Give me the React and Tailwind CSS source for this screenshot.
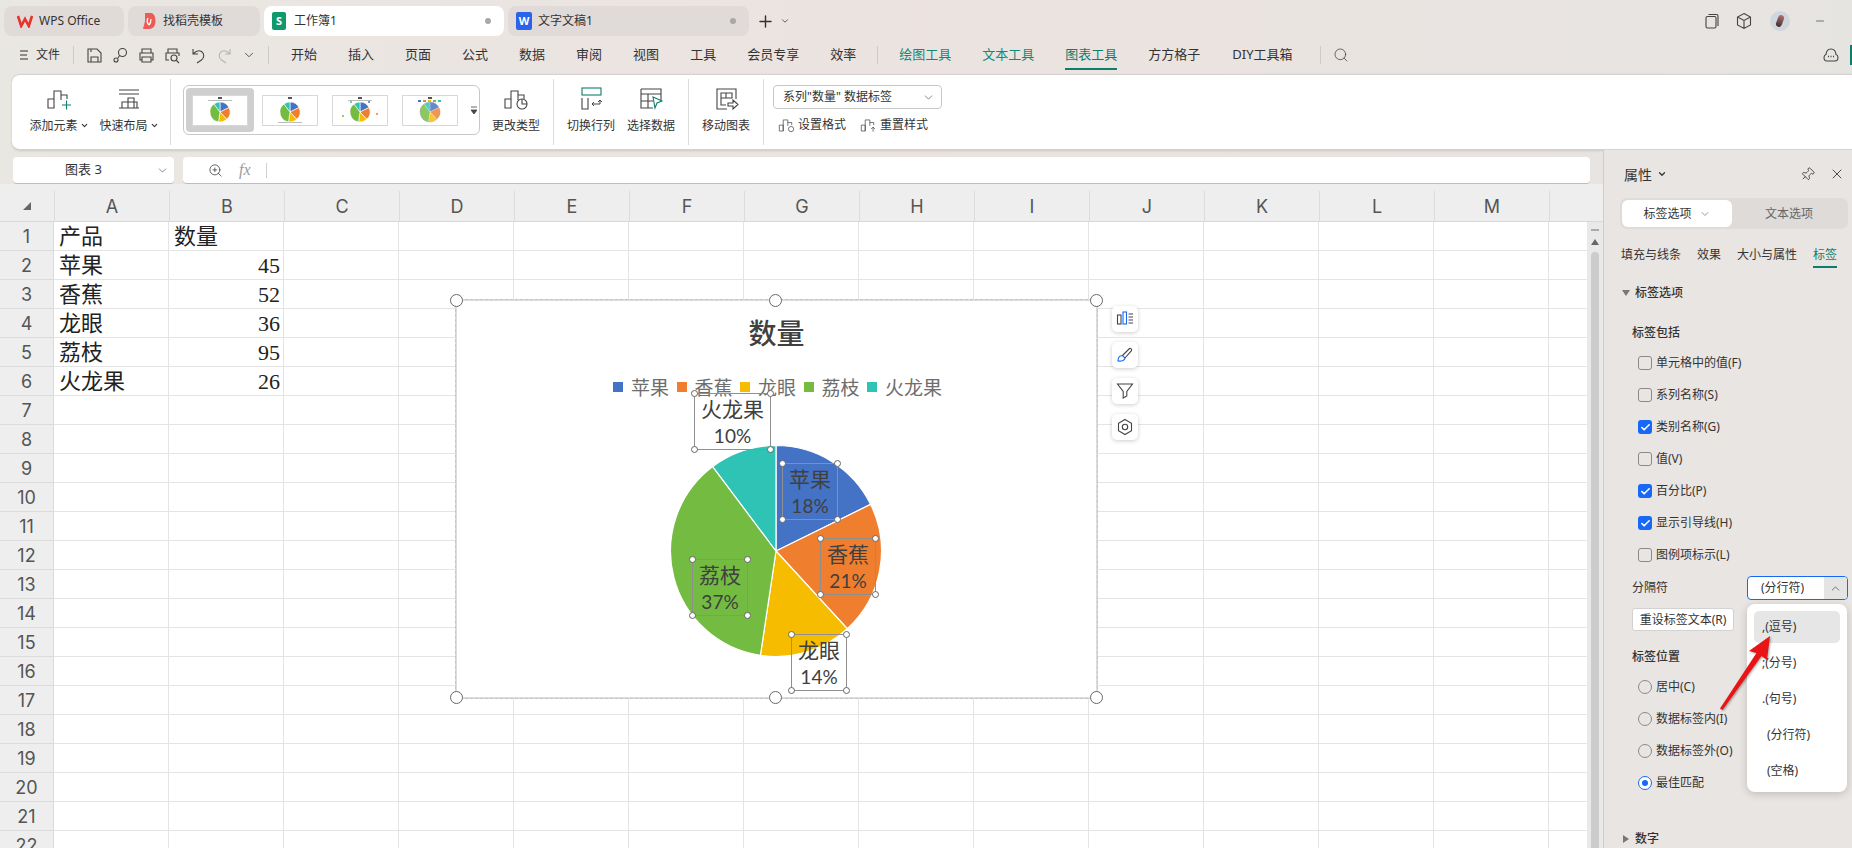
import React from "react";
import { Check, ChevronDown, ChevronUp, Plus, Search, X, Pin, Minus, ZoomIn } from "lucide-react";

const PIE = [
  { name: "苹果", value: 45, color: "#4472c4" },
  { name: "香蕉", value: 52, color: "#ef7f2e" },
  { name: "龙眼", value: 36, color: "#f5bc00" },
  { name: "荔枝", value: 95, color: "#74bb42" },
  { name: "火龙果", value: 26, color: "#2ec3b4" },
];

function slices(cx, cy, r) {
  const total = PIE.reduce((s, p) => s + p.value, 0);
  let a = 0;
  return PIE.map((p) => {
    const a2 = a + (p.value / total) * Math.PI * 2;
    const x1 = cx + r * Math.sin(a);
    const y1 = cy - r * Math.cos(a);
    const x2 = cx + r * Math.sin(a2);
    const y2 = cy - r * Math.cos(a2);
    const large = a2 - a > Math.PI ? 1 : 0;
    a = a2;
    return { d: `M${cx} ${cy}L${x1} ${y1}A${r} ${r} 0 ${large} 1 ${x2} ${y2}Z`, color: p.color };
  });
}

const COLS = ["A", "B", "C", "D", "E", "F", "G", "H", "I", "J", "K", "L", "M", ""];
const ROWS = Array.from({ length: 22 }, (_, i) => i + 1);
const DATA = {
  1: ["产品", "数量"],
  2: ["苹果", 45],
  3: ["香蕉", 52],
  4: ["龙眼", 36],
  5: ["荔枝", 95],
  6: ["火龙果", 26],
};

const LABELS = [
  { name: "火龙果", pct: "10%", left: 238, top: 93, w: 77 },
  { name: "苹果", pct: "18%", left: 326, top: 163, w: 56 },
  { name: "香蕉", pct: "21%", left: 364, top: 238, w: 56 },
  { name: "龙眼", pct: "14%", left: 335, top: 334, w: 56 },
  { name: "荔枝", pct: "37%", left: 236, top: 259, w: 56 },
];

function Bars({ x = 0, y = 0 }) {
  return (
    <path
      transform={`translate(${x} ${y})`}
      d="M1 22V13H7V22ZM7 22V5H14V14M14 9H20V13"
      fill="none"
      stroke="#444"
      strokeWidth="1.1"
    />
  );
}

function Ico({ children, size = 26 }) {
  return (
    <svg width={size} height={size} viewBox="0 0 26 26" fill="none" stroke="#444" strokeWidth="1.1">
      {children}
    </svg>
  );
}

function RibbonBtn({ icon, label, caret }) {
  return (
    <div className="flex flex-col items-center w-[60px] pt-[11px]">
      <div className="h-[26px] flex items-center justify-center">{icon}</div>
      <div className="mt-[5px] h-[17px] flex items-center text-[12px] text-[#333] whitespace-nowrap">
        {label}
        {caret && <ChevronDown className="w-[9px] h-[9px] ml-[2px]" strokeWidth={3} />}
      </div>
    </div>
  );
}

function Sep() {
  return <div className="w-px h-[66px] bg-[#dcdcdc] shrink-0" />;
}

function Thumb({ selected, pie = "a", legendBottom }) {
  return (
    <div className={`w-[68px] h-[44px] flex items-center justify-center rounded-[4px] ${selected ? "bg-[#cfcfcf]" : ""}`}>
      <div className="w-[56px] h-[31px] bg-white border border-[#d8d8d8] flex items-center justify-center relative">
        <svg width="54" height="29" viewBox="0 0 54 29">
          <rect x="25" y="1" width="4" height="2" fill="#555" />
          {!legendBottom && pie !== "d" && <rect x="15" y="4" width="24" height="1" fill="#bbb" />}
          {legendBottom && <rect x="15" y="26" width="24" height="1" fill="#bbb" />}
          {pie === "d" &&
            PIE.map((p, i) => <rect key={i} x={15 + i * 5} y="4" width="3" height="2" fill={p.color} />)}
          {slices(27, 16, 10).map((s, i) => (
            <path key={i} d={s.d} fill={s.color} stroke="#fff" strokeWidth={pie === "d" ? 0.2 : 0.6} />
          ))}
          {pie === "c" && <circle cx="10" cy="20" r="1" fill="#74bb42" />}
          {pie === "c" && <circle cx="44" cy="18" r="1" fill="#ef7f2e" />}
          {pie === "c" && <circle cx="18" cy="6" r="1" fill="#2ec3b4" />}
          {pie === "c" && <circle cx="36" cy="6" r="1" fill="#4472c4" />}
          {pie === "d" && <circle cx="27" cy="16" r="10" fill="#fff" fillOpacity="0.18" stroke="#999" strokeWidth="0.4" />}
        </svg>
      </div>
    </div>
  );
}

function Tab({ w, active, icon, label, dot }) {
  return (
    <div className={`h-[30px] rounded-lg flex items-center shrink-0 ${w} ${active ? "bg-white" : "bg-[#e0dbd8]"}`}>
      {icon}
      <span className="text-[12px] text-[#333]">{label}</span>
      {dot && <span className="ml-auto mr-[13px] w-[6px] h-[6px] rounded-full bg-[#a8a8a8]" />}
    </div>
  );
}

function CheckRow({ label, checked }) {
  return (
    <div className="h-[32px] flex items-center pl-[34px]">
      <span className={`w-[14px] h-[14px] rounded-[3px] flex items-center justify-center shrink-0 ${checked ? "bg-[#1769f5]" : "border border-[#8a8a8a]"}`}>
        {checked && <Check className="w-[11px] h-[11px] text-white" strokeWidth={3.5} />}
      </span>
      <span className="ml-[4px] text-[12px] text-[#333] whitespace-nowrap">{label}</span>
    </div>
  );
}

function RadioRow({ label, checked }) {
  return (
    <div className="h-[32px] flex items-center pl-[34px]">
      <span className={`w-[14px] h-[14px] rounded-full flex items-center justify-center shrink-0 border ${checked ? "border-[#1769f5] bg-white" : "border-[#8a8a8a]"}`}>
        {checked && <span className="w-[6px] h-[6px] rounded-full bg-[#1769f5]" />}
      </span>
      <span className="ml-[4px] text-[12px] text-[#333] whitespace-nowrap">{label}</span>
    </div>
  );
}

function Handle({ className, big }) {
  return (
    <span className={`absolute rounded-full bg-white border border-[#666] ${big ? "w-[13px] h-[13px]" : "w-[7px] h-[7px]"} ${className}`} />
  );
}

function SideBtn({ children }) {
  return (
    <div className="w-[26px] h-[26px] rounded-[5px] bg-white shadow-[0_1px_4px_rgba(0,0,0,0.2)] flex items-center justify-center">
      {children}
    </div>
  );
}

function Chart() {
  return (
    <div className="absolute left-[455px] top-[77px] w-[643px] h-[400px] bg-white border-2 border-[#dcdcdc]">
      <div className="absolute -inset-[2px] border border-dashed border-[#c6c6c6]" />
      <div className="pt-[14px] text-center text-[28px] leading-[40px] font-medium text-[#404040] [font-family:'Liberation_Serif','Noto_Sans_CJK_SC',serif]">数量</div>
      <div className="absolute left-[156px] top-[73px] flex items-center text-[19px] leading-[26px] text-[#6e6e6e] [font-family:'Noto_Sans_CJK_SC',sans-serif]">
        {PIE.map((p, i) => (
          <div key={p.name} className={`flex items-center ${i > 0 ? "ml-[7.5px]" : ""}`}>
            <span className="w-[10px] h-[10px] mr-[8px]" style={{ background: p.color }} />
            {p.name}
          </div>
        ))}
      </div>
      <svg className="absolute left-[0px] top-[0px]" width="639" height="396" viewBox="0 0 639 396">
        {slices(319, 250, 105.5).map((s, i) => (
          <path key={i} d={s.d} fill={s.color} stroke="#fff" strokeWidth="1.2" />
        ))}
      </svg>
      {LABELS.map((l) => (
        <div
          key={l.name}
          className="absolute h-[57px] border border-[#8f8f8f] flex flex-col items-center justify-center text-[#404040] leading-[27px]"
          style={{ left: l.left - 1, top: l.top - 1, width: l.w }}
        >
          <span className="text-[21px] [font-family:'Noto_Sans_CJK_SC',sans-serif]">{l.name}</span>
          <span className="text-[19px] [font-family:Lato,sans-serif]">{l.pct}</span>
          <Handle className="-left-[4px] -top-[4px]" />
          <Handle className="-right-[4px] -top-[4px]" />
          <Handle className="-left-[4px] -bottom-[4px]" />
          <Handle className="-right-[4px] -bottom-[4px]" />
        </div>
      ))}
      <Handle big className="-left-[7px] -top-[7px]" />
      <Handle big className="left-[312px] -top-[7px]" />
      <Handle big className="-right-[7px] -top-[7px]" />
      <Handle big className="-left-[7px] -bottom-[7px]" />
      <Handle big className="left-[312px] -bottom-[7px]" />
      <Handle big className="-right-[7px] -bottom-[7px]" />
      <div className="absolute left-[655px] top-[5px] flex flex-col gap-[10px]">
        <SideBtn>
          <svg width="18" height="18" viewBox="0 0 18 18" fill="none" stroke="#444" strokeWidth="1.1">
            <rect x="1.5" y="5" width="3.5" height="9" />
            <rect x="7" y="2" width="3.5" height="12" stroke="#1769f5" />
            <path d="M12.5 4H17M12.5 7H17M12.5 10H17M12.5 13H17" />
          </svg>
        </SideBtn>
        <SideBtn>
          <svg width="18" height="18" viewBox="0 0 18 18" fill="none" stroke="#1769f5" strokeWidth="1.1">
            <path d="M2 15C2 11 4 9.5 6.5 9.5L9 12C9 14 6 15.5 2 15Z" />
            <path d="M6.5 9.5L13.5 2.5C14.5 1.8 16.3 3.5 15.5 4.7L9 12" stroke="#444" />
          </svg>
        </SideBtn>
        <SideBtn>
          <svg width="18" height="18" viewBox="0 0 18 18" fill="none" stroke="#444" strokeWidth="1.1">
            <path d="M1.5 2H16.5L10.8 9.5V14L7.2 16V9.5Z" />
          </svg>
        </SideBtn>
        <SideBtn>
          <svg width="18" height="18" viewBox="0 0 18 18" fill="none" stroke="#444" strokeWidth="1.1">
            <path d="M9 1.5L15.5 5.2V12.8L9 16.5L2.5 12.8V5.2Z" />
            <circle cx="9" cy="9" r="2.7" />
          </svg>
        </SideBtn>
      </div>
    </div>
  );
}

function Sheet() {
  return (
    <div className="flex-1 min-h-0 flex flex-col overflow-hidden">
      <div className="flex h-[38px] shrink-0 bg-[#eeeeee] border-b border-[#d8d8d8] overflow-hidden">
        <div className="w-[54px] shrink-0 pt-[7px] flex items-center justify-center">
          <svg width="10" height="10" viewBox="0 0 10 10"><path d="M9 1V9H1Z" fill="#666" /></svg>
        </div>
        {COLS.map((c, i) => (
          <div key={i} className="w-[115px] shrink-0 mt-[7px] flex items-center justify-center border-l border-[#dcdcdc] text-[18px] text-[#555] [font-family:Inter,sans-serif]">
            {c}
          </div>
        ))}
      </div>
      <div className="flex-1 min-h-0 flex">
        <div className="relative flex-1 min-w-0 overflow-hidden bg-white">
          {ROWS.map((r) => {
            const d = DATA[r] || [];
            return (
              <div key={r} className="flex h-[29px]">
                <div className="w-[54px] shrink-0 flex items-center justify-center bg-[#eeeeee] border-r border-b border-[#dcdcdc] text-[18px] text-[#555] [font-family:Inter,sans-serif]">
                  {r}
                </div>
                {COLS.map((c, i) => {
                  const v = d[i];
                  return (
                    <div
                      key={i}
                      className={`w-[115px] shrink-0 border-r border-b border-[#e4e4e4] pt-[1px] flex items-center text-[22px] text-[#222] [font-family:'Liberation_Serif','Noto_Sans_CJK_SC',serif] ${typeof v === "number" ? "justify-end pr-[3px]" : "pl-[5px]"}`}
                    >
                      {v}
                    </div>
                  );
                })}
              </div>
            );
          })}
          <Chart />
        </div>
        {/* scrollbar */}
        <div className="w-[16px] shrink-0 bg-[#e9e9e9] flex flex-col items-center pt-[7px]">
          <span className="w-[8px] h-[2px] bg-[#aaaaaa]" />
          <svg width="8" height="6" viewBox="0 0 8 6" className="mt-[8px]"><path d="M0 6L4 0L8 6Z" fill="#666" /></svg>
          <span className="mt-[7px] w-[8px] flex-1 rounded-t-full bg-[#cccccc]" />
        </div>
      </div>
    </div>
  );
}

function Panel() {
  return (
    <div className="relative w-[249px] shrink-0 border-l border-[#cfccc9] bg-[#e9e5e2] text-[#333] overflow-hidden">
      <div className="h-[48px] flex items-center pl-[20px] pr-[7px]">
        <span className="text-[14px]">属性</span>
        <ChevronDown className="w-[10px] h-[10px] ml-[5px]" strokeWidth={3} />
        <Pin className="w-[15px] h-[15px] ml-auto rotate-45" strokeWidth={1.3} />
        <X className="w-[16px] h-[16px] ml-[14px]" strokeWidth={1.3} />
      </div>
      <div className="ml-[16px] w-[228px] h-[31px] rounded-[7px] bg-[#dfdbd8] flex items-center p-[2px] text-[12px]">
        <div className="w-[110px] h-[27px] rounded-[6px] bg-white flex items-center justify-center">
          标签选项
          <ChevronDown className="w-[12px] h-[12px] ml-[7px] text-[#777]" strokeWidth={1.5} />
        </div>
        <div className="flex-1 text-center text-[#666]">文本选项</div>
      </div>
      <div className="mt-[17px] pl-[17px] flex text-[12px] h-[22px]">
        <span>填充与线条</span>
        <span className="ml-[16px]">效果</span>
        <span className="ml-[16px]">大小与属性</span>
        <span className="ml-[16px] h-[22px] border-b-2 border-[#0e7d6c] text-[#0e7d6c]">标签</span>
      </div>
      <div className="mt-[16px] h-[18px] pl-[18px] flex items-center text-[12px] font-medium">
        <svg width="8" height="8" viewBox="0 0 8 8" className="mr-[5px]"><path d="M0 1H8L4 7Z" fill="#777" /></svg>
        标签选项
      </div>
      <div className="mt-[22px] h-[18px] pl-[28px] flex items-center text-[12px] font-medium">标签包括</div>
      <div className="mt-[5px]">
        <CheckRow label="单元格中的值(F)" />
        <CheckRow label="系列名称(S)" />
        <CheckRow label="类别名称(G)" checked />
        <CheckRow label="值(V)" />
        <CheckRow label="百分比(P)" checked />
        <CheckRow label="显示引导线(H)" checked />
        <CheckRow label="图例项标示(L)" />
      </div>
      <div className="mt-[5px] h-[24px] flex items-center pl-[28px] text-[12px]">
        分隔符
        <div className="ml-auto mr-[4px] w-[101px] h-[24px] rounded-[4px] border border-[#1769f5] flex items-center overflow-hidden bg-white">
          <span className="flex-1 pl-[13px]">(分行符)</span>
          <span className="w-[23px] h-full bg-[#e4e4e4] flex items-center justify-center">
            <ChevronUp className="w-[13px] h-[13px] text-[#555]" strokeWidth={1.5} />
          </span>
        </div>
      </div>
      <div className="mt-[8px] ml-[28px] w-[102px] h-[23px] rounded-[3px] bg-white border border-[#d2d2d2] flex items-center justify-center text-[12px] whitespace-nowrap">
        重设标签文本(R)
      </div>
      <div className="mt-[16px] h-[20px] pl-[28px] flex items-center text-[12px] font-medium">标签位置</div>
      <div className="mt-[4px]">
        <RadioRow label="居中(C)" />
        <RadioRow label="数据标签内(I)" />
        <RadioRow label="数据标签外(O)" />
        <RadioRow label="最佳匹配" checked />
      </div>
      <div className="mt-[30px] h-[20px] pl-[18px] flex items-center text-[12px] font-medium">
        <svg width="8" height="8" viewBox="0 0 8 8" className="mr-[5px]"><path d="M1 0L7 4L1 8Z" fill="#777" /></svg>
        数字
      </div>

      <div className="absolute left-[143px] top-[454px] w-[100px] pt-[7px] pb-[1px] px-[7px] rounded-lg bg-white shadow-[0_2px_8px_rgba(0,0,0,0.18)] text-[12px]">
        <div className="h-[32px] mb-[4px] rounded-[5px] bg-[#e6e6e6] flex items-center pl-[8px]">,(逗号)</div>
        <div className="h-[32px] mb-[4px] flex items-center pl-[8px]">;(分号)</div>
        <div className="h-[32px] mb-[4px] flex items-center pl-[8px]">.(句号)</div>
        <div className="h-[32px] mb-[4px] flex items-center pl-[13px]">(分行符)</div>
        <div className="h-[32px] mb-[4px] flex items-center pl-[13px]">(空格)</div>
      </div>
      <svg className="absolute left-[106px] top-[480px] drop-shadow-[1px_1px_1px_rgba(0,0,0,0.35)]" width="70" height="85" viewBox="0 0 70 85">
        <polygon points="60,6 57,30 51.5,26 12.5,80 10,78.5 46.5,23 39,21" fill="#e81416" />
      </svg>
    </div>
  );
}

export default function App() {
  return (
    <div className="w-[1852px] h-[848px] overflow-hidden flex flex-col bg-gradient-to-r from-[#e9e7e2] via-[#ece3e0] to-[#e6e4e1] [font-family:'Noto_Sans','Noto_Sans_CJK_SC',sans-serif]">
      {/* tabs */}
      <div className="h-[36px] pt-[6px] pl-[4px] flex items-center gap-[4px] shrink-0 relative">
        <Tab
          w="w-[120px]"
          label="WPS Office"
          icon={
            <svg width="16" height="14" viewBox="0 0 16 14" className="ml-[13px] mr-[6px]" fill="none" stroke="#e8332a" strokeWidth="2.6">
              <path d="M1 2L4.2 12L8 5L11.8 12L15 2" />
            </svg>
          }
        />
        <Tab
          w="w-[132px]"
          label="找稻壳模板"
          icon={
            <svg width="14" height="18" viewBox="0 0 14 18" className="ml-[14px] mr-[7px]">
              <path d="M3 1H9C12 1 13.5 5 13.5 9C13.5 14 11 17 7 17H1L3 9Z" fill="#ec5b56" />
              <path d="M7 13C5 11 5 8 6 6M7 13C9 11 9 9 9 7" stroke="#fff" strokeWidth="1.3" fill="none" />
            </svg>
          }
        />
        <Tab
          w="w-[240px]"
          active
          dot
          label="工作簿1"
          icon={<span className="ml-[8px] mr-[8px] w-[14px] h-[18px] rounded-[2px] bg-[#12996b] text-white text-[11px] font-bold flex items-center justify-center">S</span>}
        />
        <Tab
          w="w-[241px]"
          dot
          label="文字文稿1"
          icon={<span className="ml-[8px] mr-[6px] w-[16px] h-[18px] rounded-[2px] bg-[#2a62ea] text-white text-[11px] font-bold flex items-center justify-center">W</span>}
        />
        <Plus className="w-[19px] h-[19px] ml-[3px] text-[#333]" strokeWidth={1.8} />
        <ChevronDown className="w-[10px] h-[10px] ml-[1px] text-[#444]" strokeWidth={2} />
        <div className="ml-auto flex items-center pr-[26px]">
          <svg width="16" height="16" viewBox="0 0 16 16" fill="none" stroke="#444" strokeWidth="1.1">
            <rect x="2" y="3.5" width="10" height="11.5" rx="1.5" />
            <path d="M4.5 1.5H12.5C13.5 1.5 14 2 14 3V13" />
          </svg>
          <svg width="16" height="18" viewBox="0 0 16 18" className="ml-[16px]" fill="none" stroke="#444" strokeWidth="1.1">
            <path d="M8 1.5L14.5 5V13L8 16.5L1.5 13V5ZM1.5 5L8 8.5L14.5 5M8 8.5V16.5" />
          </svg>
          <span className="ml-[18px] w-[20px] h-[20px] rounded-full bg-[#cfd6dc] flex items-center justify-center">
            <span className="w-[6px] h-[12px] rounded-full bg-gradient-to-b from-[#b86a72] to-[#3c3436] rotate-[20deg]" />
          </span>
          <Minus className="w-[12px] h-[12px] ml-[24px] text-[#333]" strokeWidth={1.3} />
        </div>
      </div>

      {/* menu */}
      <div className="h-[38px] flex items-center shrink-0 text-[13px] text-[#333] relative">
        <svg width="10" height="10" viewBox="0 0 10 10" className="ml-[19px]" stroke="#333" strokeWidth="1.1" fill="none"><path d="M1 1H9M1 5H8M1 9H9" /></svg>
        <span className="ml-[7px] text-[12px]">文件</span>
        <span className="ml-[13px] w-px h-[18px] bg-[#cdcac7]" />
        <div className="ml-[12px] flex items-center gap-[9px]">
          <svg width="17" height="17" viewBox="0 0 17 17" fill="none" stroke="#444" strokeWidth="1.1"><path d="M2 2H11L15 6V15H2ZM5 15V10H12V15M5 2V5" /></svg>
          <svg width="17" height="17" viewBox="0 0 17 17" fill="none" stroke="#444" strokeWidth="1.1"><circle cx="10.5" cy="5.5" r="4" /><circle cx="4" cy="13" r="2" /><path d="M7.5 8.5L6 11" /></svg>
          <svg width="17" height="17" viewBox="0 0 17 17" fill="none" stroke="#444" strokeWidth="1.1"><path d="M4 6V2H13V6M4 13H2V6H15V13H13M4 10H13V15H4Z" /></svg>
          <svg width="17" height="17" viewBox="0 0 17 17" fill="none" stroke="#444" strokeWidth="1.1"><path d="M4 6V2H13V6M5 13H2V6H15V9" /><circle cx="10" cy="11" r="3" /><path d="M12.5 13.5L15 16" /></svg>
          <svg width="17" height="17" viewBox="0 0 17 17" fill="none" stroke="#444" strokeWidth="1.1"><path d="M3 2V7H8M3 7C6 4 9 3 11.5 4.5C14.5 6.5 14.5 11 11.5 13L7 16" /></svg>
          <svg width="17" height="17" viewBox="0 0 17 17" fill="none" stroke="#b5b5b5" strokeWidth="1.1"><path d="M14 2V7H9M14 7C11 4 8 3 5.5 4.5C2.5 6.5 2.5 11 5.5 13L10 16" /></svg>
          <ChevronDown className="w-[14px] h-[14px] text-[#444]" strokeWidth={1.5} />
        </div>
        <span className="ml-[12px] w-px h-[18px] bg-[#cdcac7]" />
        <div className="ml-[22px] flex items-center gap-[31px] whitespace-nowrap">
          <span>开始</span>
          <span>插入</span>
          <span>页面</span>
          <span>公式</span>
          <span>数据</span>
          <span>审阅</span>
          <span>视图</span>
          <span>工具</span>
          <span>会员专享</span>
          <span>效率</span>
        </div>
        <span className="ml-[21px] w-px h-[18px] bg-[#cdcac7]" />
        <div className="ml-[21px] flex items-center gap-[31px] whitespace-nowrap">
          <span className="text-[#0e8a78]">绘图工具</span>
          <span className="text-[#0e8a78]">文本工具</span>
          <span className="relative text-[#0e7d6c]">
            图表工具
            <span className="absolute left-0 right-0 -bottom-[5px] h-[2px] bg-[#0e7d6c]" />
          </span>
          <span>方方格子</span>
          <span className="ml-[1px]">DIY工具箱</span>
        </div>
        <span className="ml-[27px] w-px h-[18px] bg-[#cdcac7]" />
        <Search className="ml-[12px] w-[16px] h-[16px] text-[#444]" strokeWidth={1.2} />
        <svg width="16" height="16" viewBox="0 0 16 16" className="absolute left-[1823px] top-[11px]" fill="none" stroke="#444" strokeWidth="1.1">
          <path d="M4 14C2 14 1 12.5 1 10.5C1 9 2 7.8 3 7.5C3.3 4 5.5 2 8 2C10.5 2 12.7 4 13 7.5C14 7.8 15 9 15 10.5C15 12.5 14 14 12 14Z" />
          <path d="M5 9.5H6M7.5 9.5H8.5M10 9.5H11" strokeWidth="1.4" />
        </svg>
        <span className="absolute right-0 top-[9px] w-[2px] h-[20px] bg-[#0e7d6c]" />
      </div>

      {/* ribbon */}
      <div className="ml-[12px] h-[76px] shrink-0 bg-white rounded-l-lg border-t border-b border-[#d4d2d0] shadow-sm flex items-start">
        <div className="flex ml-[17px] gap-[10px]">
          <RibbonBtn
            caret
            label="添加元素"
            icon={
              <Ico>
                <Bars x={1} y={0} />
                <path d="M16 19H25M20.5 14.5V23.5" stroke="#0e7d6c" />
              </Ico>
            }
          />
          <RibbonBtn
            caret
            label="快速布局"
            icon={
              <Ico>
                <path d="M3 4H23M3 8H23" />
                <path d="M3 22H23M6 22V16H12V22M12 22V12H18V22M12 16H21V22" />
              </Ico>
            }
          />
        </div>
        <div className="ml-[11px] mt-[4px]"><Sep /></div>
        <div className="ml-[12px] mt-[10px] w-[297px] h-[50px] rounded-[6px] border border-[#c8c8c8] flex items-center pl-[2px] relative">
          <Thumb selected />
          <div className="ml-[2px]"><Thumb legendBottom /></div>
          <div className="ml-[2px]"><Thumb pie="c" /></div>
          <div className="ml-[2px]"><Thumb pie="d" /></div>
          <svg width="8" height="10" viewBox="0 0 8 10" className="absolute right-[1px] top-[20px]">
            <path d="M1 1H7M1 4H7L4 8Z" stroke="#444" fill="#444" strokeWidth="0.8" />
          </svg>
        </div>
        <div className="ml-[6px]">
          <RibbonBtn
            label="更改类型"
            icon={
              <Ico>
                <Bars x={1} y={0} />
                <circle cx="19" cy="18" r="5" fill="#fff" />
                <path d="M19 13V18H24" />
              </Ico>
            }
          />
        </div>
        <div className="ml-[7px] mt-[4px]"><Sep /></div>
        <div className="ml-[7px]">
          <RibbonBtn
            label="切换行列"
            icon={
              <Ico>
                <rect x="4" y="2" width="19" height="7" stroke="#0e7d6c" />
                <path d="M4 12V23H10V12" />
                <path d="M14 18H22V14M20 16L22 14L24 16M14 18L16 16M14 18L16 20" strokeWidth="1" />
              </Ico>
            }
          />
        </div>
        <RibbonBtn
          label="选择数据"
          icon={
            <Ico>
              <path d="M3 3H23V14M3 3V22H15M3 8H23M3 15H15M10 8V22" />
              <path d="M15 11L24 15L19 17L17 22Z" stroke="#0e7d6c" fill="#fff" />
            </Ico>
          }
        />
        <div className="ml-[7px] mt-[4px]"><Sep /></div>
        <div className="ml-[7px]">
          <RibbonBtn
            label="移动图表"
            icon={
              <Ico>
                <path d="M23 13V3H4V23H14" />
                <path d="M8 7H19V12H8ZM8 12V19H13M13 7V12" />
                <path d="M15 17H20V14L25 18.5L20 23V20H15Z" />
              </Ico>
            }
          />
        </div>
        <div className="ml-[7px] mt-[4px]"><Sep /></div>
        <div className="ml-[9px] mt-[10px]">
          <div className="w-[169px] h-[24px] rounded-[4px] border border-[#c8c8c8] flex items-center pl-[9px] pr-[6px] text-[12px] text-[#333]">
            系列"数量" 数据标签
            <ChevronDown className="ml-auto w-[13px] h-[13px] text-[#666]" strokeWidth={1.4} />
          </div>
          <div className="mt-[7px] pl-[5px] h-[17px] flex items-center text-[12px] text-[#333]">
            <Ico size={17}>
              <Bars x={1} y={1} />
              <circle cx="20" cy="20" r="4" fill="#fff" />
            </Ico>
            <span className="ml-[3px]">设置格式</span>
            <span className="ml-[14px] flex items-center">
              <Ico size={17}>
                <Bars x={1} y={1} />
                <path d="M20 24V17M17 20L20 17L23 20" />
              </Ico>
              <span className="ml-[3px]">重置样式</span>
            </span>
          </div>
        </div>
      </div>

      {/* body */}
      <div className="flex-1 min-h-0 flex">
        <div className="w-[1603px] shrink-0 flex flex-col">
          <div className="h-[34px] shrink-0 pt-[7px] flex text-[13px] text-[#333]">
            <div className="ml-[13px] w-[161px] h-[27px] rounded-[4px] bg-white border-b border-[#bdbdbd] flex items-center relative">
              <span className="w-full text-center pr-[20px]">图表 3</span>
              <ChevronDown className="absolute right-[5px] w-[13px] h-[13px] text-[#666]" strokeWidth={1.4} />
            </div>
            <div className="ml-[9px] w-[1407px] h-[27px] rounded-[4px] bg-white border-b border-[#bdbdbd] flex items-center">
              <ZoomIn className="ml-[25px] w-[15px] h-[15px] text-[#444]" strokeWidth={1.3} />
              <span className="ml-[16px] italic text-[16px] text-[#9a9a9a] [font-family:'Liberation_Serif',serif]">fx</span>
              <span className="ml-[15px] w-px h-[15px] bg-[#d0d0d0]" />
            </div>
          </div>
          <Sheet />
        </div>
        <Panel />
      </div>
    </div>
  );
}
